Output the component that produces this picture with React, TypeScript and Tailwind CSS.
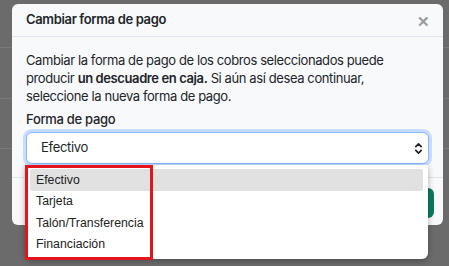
import React from 'react';

const options = ['Efectivo', 'Tarjeta', 'Talón/Transferencia', 'Financiación'];

const ChevronUpDown = () => (
  <svg width="9" height="13" viewBox="0 0 9 13" fill="none" stroke="#222" strokeWidth="1.7" strokeLinecap="round" strokeLinejoin="round">
    <path d="M1.8 4.6 L4.5 1.9 L7.2 4.6" />
    <path d="M1.8 8.4 L4.5 11.1 L7.2 8.4" />
  </svg>
);

const App: React.FC = () => {
  return (
    <div className="relative h-[266px] w-[449px] overflow-hidden bg-[#6b6b6b]" style={{ fontFamily: 'Inter, "Noto Sans", sans-serif' }}>
      {/* page behind the overlay */}
      <div className="flex flex-col">
        <div className="h-[48px] border-b border-[#7a7a7a]" />
        <div className="h-[51px] border-b border-[#7a7a7a]" />
        <div className="h-[50px] border-b border-[#7a7a7a]" />
      </div>

      {/* modal */}
      <div className="absolute left-[12px] top-[4px] flex h-[221px] w-[431px] flex-col rounded-[6px] bg-[#f8f9fb]">
        <div className="flex h-[33px] items-center justify-between border-b border-[#dde4ee] pl-[14px] pr-[13px]">
          <h2 className="text-[13px] font-semibold tracking-[-0.35px] text-[#212529]">Cambiar forma de pago</h2>
          <span className="mt-[3px] text-[15px] font-bold leading-none text-[#9a9a9a]">✕</span>
        </div>
        <div className="px-[14px] pt-[14px]">
          <p className="text-[13px] leading-[18px] tracking-[-0.4px] text-[#212529]">
            Cambiar la forma de pago de los cobros seleccionados puede producir{' '}
            <strong className="font-semibold">un descuadre en caja.</strong> Si aún así desea continuar, seleccione la nueva forma de pago.
          </p>
          <div className="mt-[5px] text-[13px] font-medium leading-[18px] tracking-[-0.3px] text-[#212529]">Forma de pago</div>
          <div className="mt-[4px] flex h-[32px] items-center justify-between rounded-[6px] border border-[#86b7fe] bg-white pl-[14px] pr-[5px] ring-[3px] ring-[#c7ddff]">
            <span className="text-[13px] tracking-[-0.3px] text-[#212529]">Efectivo</span>
            <ChevronUpDown />
          </div>
        </div>
        <div className="mt-[13px] flex justify-end border-t border-[#dde4ee] px-[9px] pt-[10px]">
          <div className="h-[30px] w-[80px] rounded-[6px] bg-[#0b7a5f]" />
        </div>
      </div>

      {/* native select popup */}
      <div className="absolute left-[25px] top-[165px] h-[94px] w-[403px] rounded-b-[6px] bg-white px-[5px] pt-[4px] shadow-[0_2px_6px_rgba(0,0,0,0.3)]" style={{ fontFamily: '"Liberation Sans", Arial, sans-serif' }}>
        {options.map((o, i) => (
          <div
            key={o}
            className={`flex h-[21.5px] items-center pl-[6px] text-[12.3px] text-[#222] ${i === 0 ? 'rounded-[2px] bg-[#e1e1e1]' : ''}`}
          >
            {o}
          </div>
        ))}
      </div>

      {/* highlight annotation */}
      <div className="absolute left-[25px] top-[165px] h-[95px] w-[128px] border-[3px] border-[#e3141c]" />
    </div>
  );
};

export default App;
